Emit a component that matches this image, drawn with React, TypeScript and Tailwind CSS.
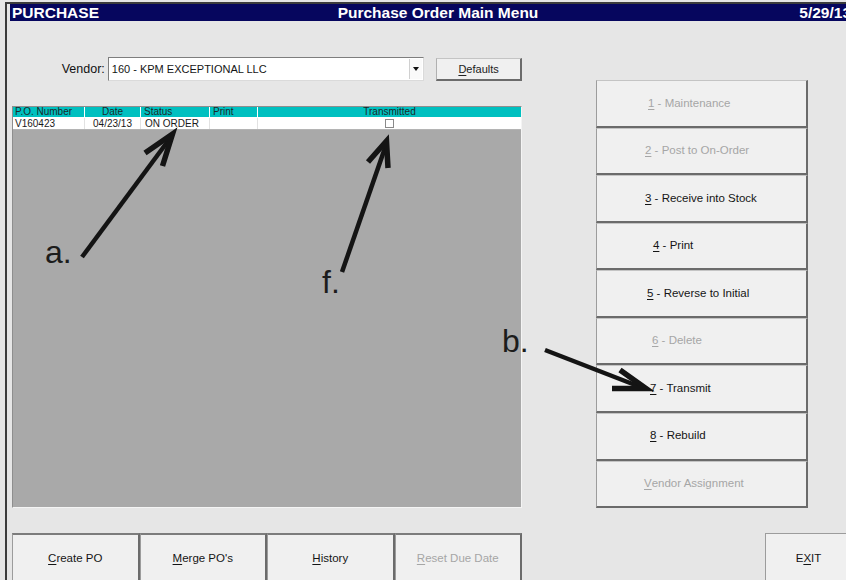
import React from "react";

type SideItem = { mn: string; rest: string; disabled?: boolean; pad: string };

const SIDE_ITEMS: SideItem[] = [
  { mn: "1", rest: " - Maintenance", disabled: true, pad: "pl-[51px]" },
  { mn: "2", rest: " - Post to On-Order", disabled: true, pad: "pl-[48px]" },
  { mn: "3", rest: " - Receive into Stock", pad: "pl-[48px]" },
  { mn: "4", rest: " - Print", pad: "pl-[56px]" },
  { mn: "5", rest: " - Reverse to Initial", pad: "pl-[50px]" },
  { mn: "6", rest: " - Delete", disabled: true, pad: "pl-[55px]" },
  { mn: "7", rest: " - Transmit", pad: "pl-[53px]" },
  { mn: "8", rest: " - Rebuild", pad: "pl-[53px]" },
  { mn: "V", rest: "endor Assignment", disabled: true, pad: "pl-[47px]" },
];

type BottomItem = { mn: string; rest: string; disabled?: boolean };

const BOTTOM_ITEMS: BottomItem[] = [
  { mn: "C", rest: "reate PO" },
  { mn: "M", rest: "erge PO's" },
  { mn: "H", rest: "istory" },
  { mn: "R", rest: "eset Due Date", disabled: true },
];

function Mn({ children }: { children: React.ReactNode }) {
  return <span className="underline underline-offset-[2px] decoration-1">{children}</span>;
}

function SideButton({ item }: { item: SideItem }) {
  return (
    <div
      className={`flex-1 flex items-center bg-[#f0f0f0] border-t border-l border-t-[#c4c4c4] border-l-[#9c9c9c] border-r-2 border-b-2 border-r-[#6b6b6b] border-b-[#6b6b6b] text-[11.5px] leading-none whitespace-pre ${item.pad} ${
        item.disabled ? "text-[#a6a6a6]" : "text-[#151515]"
      }`}
    >
      <Mn>{item.mn}</Mn>
      {item.rest}
    </div>
  );
}

function BottomButton({ item }: { item: BottomItem }) {
  return (
    <div
      className={`shrink-0 w-[127.5px] h-[50px] flex items-center justify-center bg-[#f0f0f0] border-t-2 border-l border-t-[#7c7c7c] border-l-[#9c9c9c] border-r-2 border-r-[#6b6b6b] text-[11.5px] leading-none whitespace-pre ${
        item.disabled ? "text-[#a6a6a6]" : "text-[#151515]"
      }`}
    >
      <Mn>{item.mn}</Mn>
      {item.rest}
    </div>
  );
}

function PoTable() {
  return (
    <div className="mt-[25px] h-[402px] flex flex-col bg-[#a9a9a9] border-t border-l border-t-[#8e8e8e] border-l-[#8e8e8e] border-r border-b border-r-[#f4f4f4] border-b-[#f4f4f4] text-[10px] leading-none">
      <div className="h-[11px] grid grid-cols-[72px_56px_69px_48px_1fr] bg-[#00c0c0] text-[#1c2a2a] border-b border-white">
        <div className="flex items-center pl-[2px] border-r border-white">P.O. Number</div>
        <div className="flex items-center justify-center border-r border-white">Date</div>
        <div className="flex items-center pl-[3px] border-r border-white">Status</div>
        <div className="flex items-center pl-[3px] border-r border-white">Print</div>
        <div className="flex items-center justify-center">Transmitted</div>
      </div>
      <div className="h-[12px] grid grid-cols-[72px_56px_69px_48px_1fr] bg-white text-[#1a1a1a] border-b border-[#b4b4b4]">
        <div className="flex items-center pl-[2px] border-r border-[#e2e2e2]">V160423</div>
        <div className="flex items-center justify-center border-r border-[#e2e2e2]">04/23/13</div>
        <div className="flex items-center pl-[4px] border-r border-[#e2e2e2]">ON ORDER</div>
        <div className="border-r border-[#e2e2e2]" />
        <div className="flex items-center justify-center">
          <div className="w-[9px] h-[9px] bg-white border border-[#8a8a8a]" />
        </div>
      </div>
    </div>
  );
}

function VendorRow() {
  return (
    <div className="mt-[36px] flex items-start">
      <div className="w-[93px] h-[24px] flex items-center justify-end text-[12.5px] leading-none text-[#111]">
        Vendor:
      </div>
      <div className="ml-[3px] w-[317px] h-[24px] flex items-center bg-white border border-t-[#7e7e7e] border-l-[#7e7e7e] border-r-[#dadada] border-b-[#dadada]">
        <span className="pl-[3px] text-[11px] leading-none text-[#151515]">160 - KPM EXCEPTIONAL LLC</span>
        <div className="ml-auto mr-[1px] w-[13px] h-[20px] flex items-center justify-center bg-[#fafafa] border-l border-[#d0d0d0]">
          <div className="w-0 h-0 border-l-[3px] border-r-[3px] border-t-[4px] border-l-transparent border-r-transparent border-t-[#111]" />
        </div>
      </div>
      <div className="ml-[12px] mt-[1px] w-[86px] h-[23px] flex items-center justify-center bg-[#f0f0f0] border-t border-l border-t-[#c4c4c4] border-l-[#b0b0b0] border-r-2 border-b-2 border-r-[#6b6b6b] border-b-[#6b6b6b] text-[11px] leading-none text-[#222] whitespace-pre">
        <Mn>D</Mn>efaults
      </div>
    </div>
  );
}

function Annotations() {
  return (
    <>
      <svg
        className="absolute inset-0 pointer-events-none"
        width="846"
        height="580"
        viewBox="0 0 846 580"
      >
        <g stroke="#141414" fill="none" strokeLinejoin="miter" strokeLinecap="butt">
          {/* a. -> status column */}
          <line x1="82" y1="257" x2="171" y2="137" strokeWidth="4.5" />
          <polyline points="145,153 172.5,134 162.5,166" strokeWidth="5.5" />
          {/* f. -> transmitted checkbox */}
          <line x1="342" y1="272" x2="386" y2="145" strokeWidth="4.5" />
          <polyline points="368,162 386.5,141 388,168" strokeWidth="5.5" />
          {/* b. -> transmit button */}
          <line x1="545" y1="350" x2="643" y2="388" strokeWidth="4.5" />
          <polyline points="620,370 646,388.5 612,388.5" strokeWidth="5.5" />
        </g>
      </svg>
      <span className="absolute left-[45px] top-[236px] text-[32px] leading-none text-[#1c1c1c]">a.</span>
      <span className="absolute left-[322px] top-[266px] text-[32px] leading-none text-[#1c1c1c]">f.</span>
      <span className="absolute left-[502px] top-[325px] text-[32px] leading-none text-[#1c1c1c]">b.</span>
    </>
  );
}

export default function App() {
  return (
    <div className="relative w-[846px] h-[580px] overflow-hidden bg-[#e6e6e6] font-['Liberation_Sans',Arial,sans-serif]">
      <div className="h-full pl-[5px] pt-[2px]">
        <div className="h-full border-l-2 border-t-2 border-[#3c3c3c] pl-[3px]">
          {/* title bar */}
          <div className="w-[856px] h-[17px] grid grid-cols-[1fr_auto_1fr] items-center bg-[#06065e] text-white font-bold text-[15.5px] leading-none px-[2px]">
            <span>PURCHASE</span>
            <span>Purchase Order Main Menu</span>
            <span className="text-right pr-[13px]">5/29/13</span>
          </div>

          <div className="flex">
            <div className="shrink-0 ml-[2px] w-[510px] flex flex-col">
              <VendorRow />
              <PoTable />
            </div>
            <div className="shrink-0 ml-[74px] mt-[59px] w-[212px] h-[428px] flex flex-col">
              {SIDE_ITEMS.map((it) => (
                <SideButton key={it.mn} item={it} />
              ))}
            </div>
          </div>

          <div className="mt-[25px] ml-[2px] flex">
            {BOTTOM_ITEMS.map((it) => (
              <BottomButton key={it.mn} item={it} />
            ))}
            <div className="shrink-0 ml-[243px] w-[86px] h-[50px] flex items-center justify-center bg-[#f0f0f0] border-t border-l border-t-[#9c9c9c] border-l-[#9c9c9c] text-[11.5px] leading-none text-[#151515] whitespace-pre">
              E<Mn>X</Mn>IT
            </div>
          </div>
        </div>
      </div>
      <Annotations />
    </div>
  );
}
